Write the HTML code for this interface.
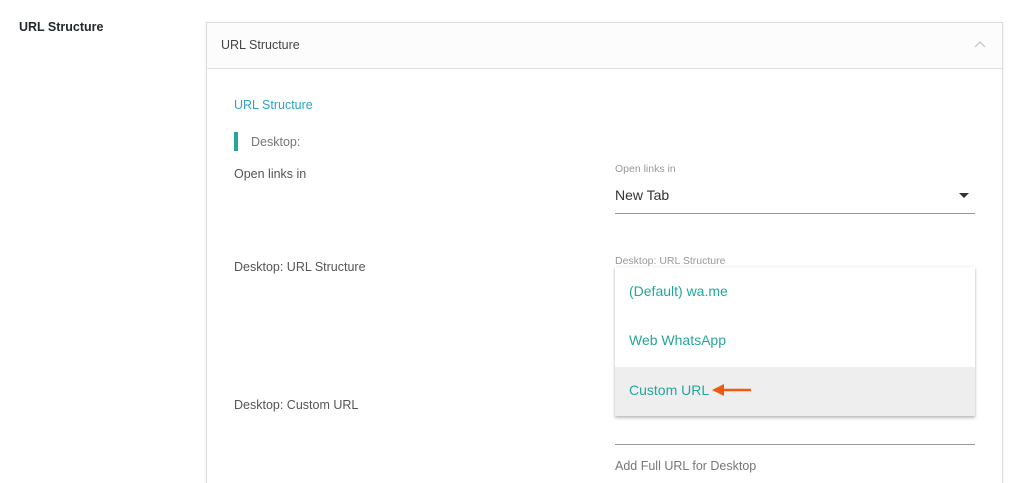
<!DOCTYPE html>
<html style="height:483px;overflow:hidden"><head><style>
html,body{margin:0;height:483px;overflow:hidden}
body{width:1024px;background:#fff;font-family:"Liberation Sans",sans-serif;position:relative}
.a{position:absolute;white-space:nowrap}
</style></head><body>
<div class="a" style="left:19px;top:20px;font-size:12.5px;font-weight:bold;color:#23282d">URL Structure</div>
<div class="a" style="left:206px;top:22px;width:795px;height:462px;border:1px solid #ddd;border-bottom:none;box-shadow:0 1px 3px rgba(0,0,0,.08)"></div>
<div class="a" style="left:207px;top:23px;width:795px;height:45px;background:#fcfcfc;border-bottom:1px solid #e3e3e3"></div>
<div class="a" style="left:221px;top:38px;font-size:12.5px;color:#444">URL Structure</div>
<svg class="a" style="left:973px;top:40px" width="14" height="10"><path d="M2 7 L7 2 L12 7" fill="none" stroke="#ccc" stroke-width="1.5"/></svg>
<div class="a" style="left:234px;top:98px;font-size:12.5px;color:#2ea3c4">URL Structure</div>
<div class="a" style="left:234px;top:132px;width:4px;height:19px;background:#26a69a"></div>
<div class="a" style="left:251px;top:135px;font-size:12.5px;color:#777">Desktop:</div>
<div class="a" style="left:234px;top:167px;font-size:12.5px;color:#555">Open links in</div>
<div class="a" style="left:615px;top:163px;font-size:10.5px;color:#999">Open links in</div>
<div class="a" style="left:615px;top:187px;font-size:14px;color:#333">New Tab</div>
<svg class="a" style="left:958px;top:191px" width="12" height="8"><path d="M1 2 L11 2 L6 7Z" fill="#333"/></svg>
<div class="a" style="left:615px;top:213px;width:360px;height:1px;background:#999"></div>
<div class="a" style="left:234px;top:260px;font-size:12.5px;color:#555">Desktop: URL Structure</div>
<div class="a" style="left:615px;top:255px;font-size:10.5px;color:#999">Desktop: URL Structure</div>
<div class="a" style="left:615px;top:267px;width:360px;height:149px;background:#fff;box-shadow:0 2px 3px rgba(0,0,0,.25),0 0 2px rgba(0,0,0,.1)">
<div style="position:absolute;left:0;top:100px;width:360px;height:49px;background:#eee"></div>
<div class="a" style="left:14px;top:16px;font-size:14px;color:#26a69a">(Default) wa.me</div>
<div class="a" style="left:14px;top:65px;font-size:14px;color:#26a69a">Web WhatsApp</div>
<div class="a" style="left:14px;top:115px;font-size:14px;color:#26a69a">Custom URL</div>
<svg class="a" style="left:96px;top:115px" width="42" height="16"><path d="M10 8 H40" stroke="#f05a13" stroke-width="2.5"/><path d="M1 8 L13 2 L13 14Z" fill="#f05a13"/></svg>
</div>
<div class="a" style="left:234px;top:398px;font-size:12.5px;color:#555">Desktop: Custom URL</div>
<div class="a" style="left:615px;top:444px;width:360px;height:1px;background:#999"></div>
<div class="a" style="left:615px;top:459px;font-size:12.5px;color:#777">Add Full URL for Desktop</div>
</body></html>
